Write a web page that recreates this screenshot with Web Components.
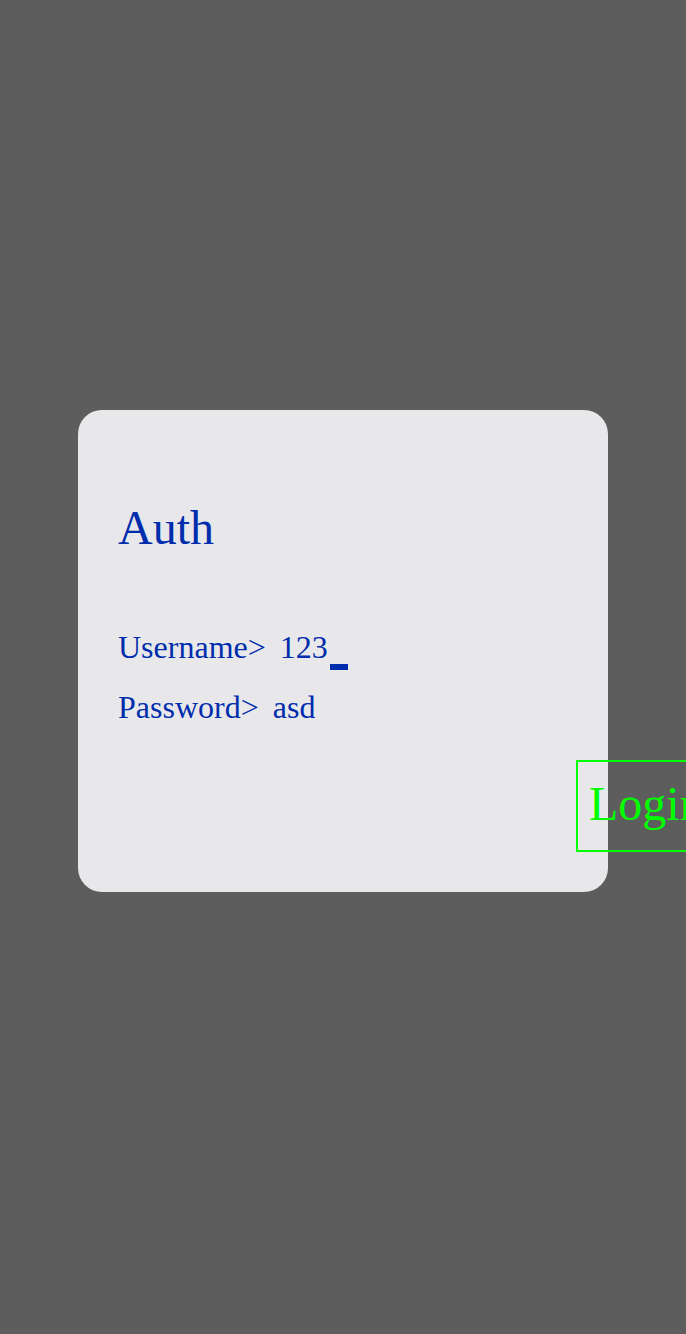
<!DOCTYPE html>
<html lang="en">
<head>
<meta charset="utf-8">
<meta name="viewport" content="width=device-width, initial-scale=1">
<title>Auth</title>
<style>
  body { margin: 0; font-family: "Liberation Serif", serif; }
</style>
</head>
<body>
<auth-page>
  <auth-card heading="Auth">
    <auth-field label="Username>" name="username" value="123" cursor></auth-field>
    <auth-field label="Password>" name="password" value="asd"></auth-field>
    <auth-button slot="action">Login</auth-button>
  </auth-card>
</auth-page>
<script>
class AuthPage extends HTMLElement {
  constructor() {
    super();
    this.attachShadow({ mode: "open" }).innerHTML = `
      <style>
        :host {
          display: grid;
          align-items: center;
          box-sizing: border-box;
          min-height: 100vh;
          padding: 0 78px 31px;
          background: #5d5d5d;
          border-bottom: 1px solid #60585c;
          color: #002dad;
          overflow: hidden;
        }
      </style>
      <slot></slot>`;
  }
}

class AuthCard extends HTMLElement {
  constructor() {
    super();
    this.attachShadow({ mode: "open" }).innerHTML = `
      <style>
        :host {
          display: block;
          padding: 90px 40px 40px;
          border-radius: 24px;
          background: #e8e8ea;
        }
        h1 { margin: 0 0 74px; font-size: 48px; line-height: 56px; font-weight: 400; }
        .fields { display: flex; flex-direction: column; gap: 20px; }
        /* The action starts past the right edge of the content. */
        .action { display: flex; margin-top: 30px; padding-left: calc(100% + 8px); }
      </style>
      <h1></h1>
      <div class="fields"><slot></slot></div>
      <div class="action"><slot name="action"></slot></div>`;
  }
  connectedCallback() {
    this.shadowRoot.querySelector("h1").textContent = this.getAttribute("heading");
  }
}

class AuthField extends HTMLElement {
  constructor() {
    super();
    this.attachShadow({ mode: "open" }).innerHTML = `
      <style>
        :host { display: flex; height: 40px; font-size: 32px; line-height: 34px; }
        label { margin-right: 14px; }
        input {
          field-sizing: content;
          height: 34px;
          padding: 0;
          border: 0;
          outline: 0;
          background: none;
          color: inherit;
          font: inherit;
        }
        .cursor { display: none; align-self: flex-end; width: 18px; height: 6px; margin-left: 2px; background: currentColor; }
        :host([cursor]) .cursor { display: block; }
      </style>
      <label for="box"></label>
      <input id="box" type="text" autocomplete="off" spellcheck="false">
      <span class="cursor"></span>`;
  }
  connectedCallback() {
    const input = this.shadowRoot.querySelector("input");
    this.shadowRoot.querySelector("label").textContent = this.getAttribute("label");
    input.name = this.getAttribute("name");
    input.value = this.getAttribute("value");
  }
}

class AuthButton extends HTMLElement {
  constructor() {
    super();
    this.attachShadow({ mode: "open" }).innerHTML = `
      <style>
        :host { display: block; flex: none; }
        button {
          display: block;
          padding: 14px 11px 18px;
          border: 2px solid #00ff00;
          background: none;
          color: #00ff00;
          font: inherit;
          font-size: 48px;
          line-height: 56px;
          cursor: pointer;
        }
      </style>
      <button type="button"><slot></slot></button>`;
  }
}

customElements.define("auth-page", AuthPage);
customElements.define("auth-card", AuthCard);
customElements.define("auth-field", AuthField);
customElements.define("auth-button", AuthButton);
</script>
</body>
</html>
